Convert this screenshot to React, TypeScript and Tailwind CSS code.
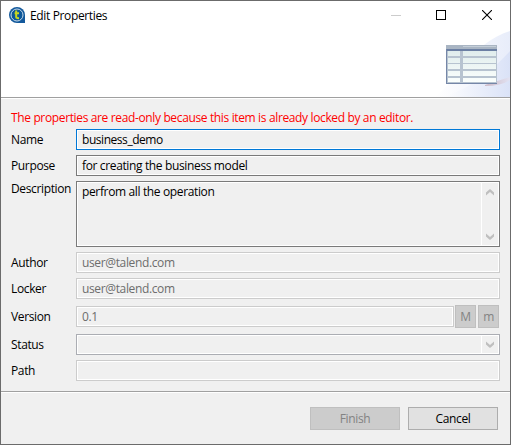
import React from "react";

function Field({ children, border = "border-[#cccccc]", className = "h-[21px]", text = "text-[#6d6d6d]" }: { children?: React.ReactNode; border?: string; className?: string; text?: string }) {
  return (
    <div className={`flex min-w-0 flex-1 border ${border} bg-white p-px ${className}`}>
      <div className={`flex min-w-0 flex-1 bg-[#f0f0f0] pl-1 leading-[17px] ${text}`}>{children}</div>
    </div>
  );
}

function Row({ label, children, className = "", labelClass = "pt-[2px]" }: { label: string; children: React.ReactNode; className?: string; labelClass?: string }) {
  return (
    <div className={`flex ${className}`}>
      <div className={`w-[65px] shrink-0 leading-[17px] ${labelClass}`}>{label}</div>
      {children}
    </div>
  );
}

function Chevron({ up = false }: { up?: boolean }) {
  return (
    <svg width="8" height="7" viewBox="0 0 8 7" className={up ? "" : "-scale-y-100"}>
      <path d="M0 3.6L3.6 0.2h0.8L8 3.6V6.6L4 2.9L0 6.6Z" fill="#bfbfbf" />
    </svg>
  );
}

function Logo() {
  return (
    <svg width="16" height="16" viewBox="0 0 16 16">
      <path d="M8 0a8 8 0 0 0 0 16h8V8a8 8 0 0 0-8-8Z" fill="#13599c" />
      <circle cx="8" cy="8" r="6" fill="#0d5799" stroke="#c9dbe9" strokeWidth="1" />
      <path d="M7.2 3.5V10q0 1.3 2.8 1.1M5.6 6.2h4.4" fill="none" stroke="#c8d61f" strokeWidth="2" />
    </svg>
  );
}

function TableArt() {
  return (
    <svg width="75" height="68" viewBox="0 0 75 68">
      <defs>
        <linearGradient id="haze" x1="0" x2="1">
          <stop offset="0" stopColor="#ffffff" />
          <stop offset="1" stopColor="#e8edfa" />
        </linearGradient>
        <linearGradient id="low" x1="0" x2="1">
          <stop offset="0" stopColor="#ffffff" />
          <stop offset="1" stopColor="#dae2f7" />
        </linearGradient>
        <linearGradient id="shade" x1="0" x2="1">
          <stop offset="0" stopColor="#cdb9c4" />
          <stop offset="1" stopColor="#e2e3f3" />
        </linearGradient>
        <linearGradient id="cells" x1="0" x2="0" y1="21" y2="53" gradientUnits="userSpaceOnUse">
          <stop offset="0" stopColor="#dfecec" />
          <stop offset="1" stopColor="#fbfffd" />
        </linearGradient>
      </defs>
      <path d="M0 68C22 52 36 14 75 2V68Z" fill="url(#haze)" />
      <path d="M5 68C35 62 58 40 75 22V68Z" fill="url(#low)" />
      <path d="M50 56L75 48V51Q66 57 50 57Z" fill="url(#shade)" />
      <rect x="11" y="16" width="51" height="39" fill="#b7c3d0" />
      <rect x="11" y="16" width="51" height="4" fill="#a9b5c3" />
      <rect x="28" y="17" width="33" height="1" fill="#c4ced8" />
      <rect x="11" y="20" width="51" height="2" fill="#6b7fa3" />
      {[22, 29, 35, 42, 49].map((y) => (
        <g key={y} fill="url(#cells)">
          <rect x="13" y={y} width="12" height={y === 49 ? 4 : 5} />
          <rect x="28" y={y} width="33" height={y === 49 ? 4 : 5} />
        </g>
      ))}
      <path d="M11.5 20V55M11 54.5H62" stroke="#7587a8" fill="none" />
    </svg>
  );
}

export default function App() {
  return (
    <div className="flex h-[445px] w-[511px] flex-col border border-[#6b6b6b] bg-[#f0f0f0] font-['Open_Sans','Noto_Sans',sans-serif] text-[12px] tracking-[-0.36px] text-black">
      <header className="flex h-[96px] shrink-0 flex-col bg-white">
        <div className="flex h-[28px] shrink-0 items-center pl-2">
          <Logo />
          <span className="ml-[5px] flex-1 pt-[2px]">Edit Properties</span>
          <div className="flex items-center pr-[18px]">
            <div className="h-px w-[10px] bg-[#cccccc]" />
            <div className="ml-[35px] h-[10px] w-[10px] border border-black" />
            <svg className="ml-[36px]" width="10" height="10" viewBox="0 0 10 10">
              <path d="M0 0L10 10M10 0L0 10" stroke="#000" strokeWidth="1.1" />
            </svg>
          </div>
        </div>
        <div className="flex justify-end">
          <TableArt />
        </div>
      </header>
      <div className="h-[2px] shrink-0 border-t border-[#a0a0a0] bg-white" />
      <main className="flex h-[292px] shrink-0 flex-col pl-[10px] pr-[10px] pt-[10px]">
        <p className="mb-[3px] h-[17px] leading-[17px] text-[#ff0000]">The properties are read-only because this item is already locked by an editor.</p>
        <Row label="Name"><Field border="border-[#0078d7]" text="text-black tracking-[-0.45px]">business_demo</Field></Row>
        <Row label="Purpose" className="mt-[5px]"><Field border="border-[#7a7a7a]" text="text-black">for creating the business model</Field></Row>
        <Row label="Description" className="mt-[5px]" labelClass="-mt-px">
          <Field border="border-[#7a7a7a]" className="h-[66px]" text="text-black">
            <span className="flex-1">perfrom all the operation</span>
            <div className="flex w-[17px] flex-col items-center justify-between border-l border-white pb-[5px] pt-[6px]">
              <Chevron up />
              <Chevron />
            </div>
          </Field>
        </Row>
        <Row label="Author" className="mt-[5px]"><Field>user@talend.com</Field></Row>
        <Row label="Locker" className="mt-[5px]"><Field>user@talend.com</Field></Row>
        <Row label="Version" className="mt-[6px]" labelClass="pt-[3px]">
          <Field className="mt-px h-[21px]">0.1</Field>
          <button className="ml-px h-[23px] w-[21px] border border-[#bfbfbf] bg-[#cccccc] text-[#838383]">M</button>
          <button className="ml-[2px] mr-px h-[23px] w-[21px] border border-[#bfbfbf] bg-[#cccccc] text-[#838383]">m</button>
        </Row>
        <Row label="Status" className="mt-[6px]">
          <Field border="border-[#abadb3]">
            <span className="flex-1" />
            <div className="flex w-[17px] items-center justify-center border-l border-white"><Chevron /></div>
          </Field>
        </Row>
        <Row label="Path" className="mt-[5px]"><Field /></Row>
      </main>
      <div className="h-[2px] shrink-0 border-t border-[#a0a0a0] bg-white" />
      <footer className="flex justify-end gap-2 pr-3 pt-[14px]">
        <button className="h-[23px] w-[90px] border border-[#bfbfbf] bg-[#cccccc] text-[#838383]">Finish</button>
        <button className="h-[23px] w-[90px] border border-[#adadad] bg-[#e1e1e1]">Cancel</button>
      </footer>
    </div>
  );
}
